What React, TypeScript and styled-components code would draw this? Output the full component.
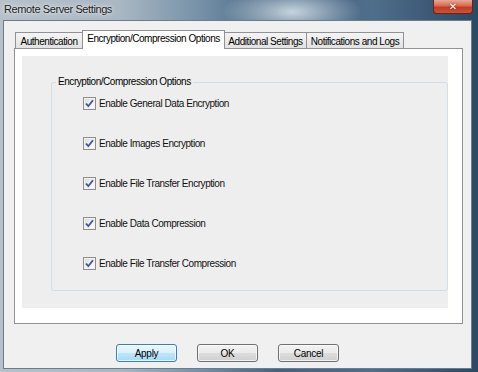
import React from "react";
import styled, { createGlobalStyle } from "styled-components";

const Global = createGlobalStyle`
  html, body { margin: 0; padding: 0; }
  body {
    width: 478px;
    height: 372px;
    overflow: hidden;
    font-family: "Liberation Sans", Arial, sans-serif;
  }
`;

const Frame = styled.div`
  width: 478px;
  height: 372px;
  box-sizing: border-box;
  display: flex;
  flex-direction: column;
  background:
    radial-gradient(ellipse 70px 26px at 292px 12px, rgba(220, 232, 240, 0.85), rgba(220, 232, 240, 0) 100%),
    linear-gradient(90deg, #b6c1ca 0%, #a9b7c3 25%, #7590a7 42%, #45627d 58%, #4f6e8a 78%, #2c4963 100%);
`;

const TitleBar = styled.div`
  height: 20px;
  flex: none;
  display: flex;
  align-items: flex-start;
  padding: 0 5px 0 4px;
`;

const Title = styled.div`
  font-size: 11px;
  line-height: 14px;
  padding-top: 2px;
  letter-spacing: -0.4px;
  color: #1a1a1a;
  text-shadow: 0 0 6px rgba(255, 255, 255, 0.9), 0 0 2px rgba(255, 255, 255, 0.8);
`;

const CloseButton = styled.div`
  margin-left: auto;
  width: 40px;
  height: 14px;
  box-sizing: border-box;
  border: 1px solid #6b2416;
  border-top: none;
  border-radius: 0 0 4px 4px;
  background: linear-gradient(180deg, #e8a898 0%, #d66a52 45%, #c23b22 55%, #c9553c 100%);
  display: flex;
  align-items: center;
  justify-content: center;
  color: #fff;
  font-family: "DejaVu Sans", sans-serif;
  font-weight: bold;
  font-size: 10px;
  line-height: 10px;
  text-shadow: 0 0 2px #5a1a0c;
`;

const Client = styled.div`
  flex: 1;
  margin: 0 6px 3px 3px;
  background: #f0f0f0;
  border: 1px solid #6e7c8a;
  display: flex;
  flex-direction: column;
  padding: 9px 0 0 10px;
`;

const TabStrip = styled.div`
  height: 18px;
  display: flex;
  align-items: flex-end;
  padding-left: 1px;
  position: relative;
  z-index: 1;
`;

const Tab = styled.div<{ $active?: boolean; $width: number }>`
  box-sizing: border-box;
  width: ${(p) => p.$width}px;
  height: ${(p) => (p.$active ? "19px" : "16px")};
  margin-bottom: ${(p) => (p.$active ? "-1px" : "0")};
  margin-left: -1px;
  padding-top: ${(p) => (p.$active ? "2px" : "3px")};
  text-align: center;
  border: 1px solid #8e9196;
  border-bottom: none;
  background: ${(p) =>
    p.$active ? "#ffffff" : "linear-gradient(180deg, #f4f4f4 0%, #ececec 50%, #e2e2e2 100%)"};
  font-size: 10px;
  line-height: 12px;
  letter-spacing: -0.45px;
  color: #000;
  white-space: nowrap;
  &:first-child { margin-left: 0; }
`;

const Panel = styled.div`
  width: 449px;
  height: 276px;
  box-sizing: border-box;
  border: 1px solid #8e9196;
  background: #ffffff;
  padding: 7px 14px 15px 7px;
  display: flex;
`;

const Inner = styled.div`
  flex: 1;
  background: #eeeeee;
  padding: 20px 0 17px 29px;
  display: flex;
`;

const Group = styled.fieldset`
  flex: 1;
  margin: 0;
  padding: 0;
  border: 1px solid #d3dde5;
  border-radius: 3px;
  min-width: 0;
`;

const Legend = styled.legend`
  margin-left: 4px;
  padding: 0 2px;
  font-size: 10px;
  line-height: 12px;
  letter-spacing: -0.45px;
  color: #000;
`;

const OptionList = styled.div`
  display: flex;
  flex-direction: column;
  gap: 27px;
  padding: 9px 0 0 31px;
`;

const Option = styled.label`
  display: flex;
  align-items: center;
  height: 13px;
  font-size: 10px;
  letter-spacing: -0.45px;
  color: #111;
`;

const Box = styled.span`
  width: 13px;
  height: 13px;
  box-sizing: border-box;
  border: 1px solid #8f8f8f;
  background: linear-gradient(135deg, #d8d8d8 0%, #f4f4f4 60%, #ffffff 100%);
  box-shadow: inset 0 0 0 1px #f2f2f2;
  display: flex;
  align-items: center;
  justify-content: center;
  margin-right: 3px;
  flex: none;
`;

const ButtonRow = styled.div`
  display: flex;
  gap: 20px;
  margin-top: 20px;
  padding-left: 102px;
`;

const Button = styled.div<{ $default?: boolean }>`
  width: 61px;
  height: 18px;
  box-sizing: border-box;
  border: 1px solid ${(p) => (p.$default ? "#3c7fb1" : "#707070")};
  border-radius: 3px;
  background: ${(p) =>
    p.$default
      ? "linear-gradient(180deg, #eaf6fd 0%, #d9f0fc 50%, #bee6fd 51%, #a7d9f5 100%)"
      : "linear-gradient(180deg, #f2f2f2 0%, #ebebeb 50%, #dddddd 51%, #cfcfcf 100%)"};
  box-shadow: inset 0 0 0 1px rgba(255, 255, 255, 0.7);
  display: flex;
  align-items: center;
  justify-content: center;
  font-size: 10px;
  letter-spacing: -0.3px;
  color: #000;
`;

const Check = () => (
  <svg width="9" height="9" viewBox="0 0 9 9">
    <path d="M1 4.5 L3.3 7.2 L8 1.2" fill="none" stroke="#3f5596" strokeWidth="1.8" strokeLinejoin="miter" />
  </svg>
);

const options = [
  "Enable General Data Encryption",
  "Enable Images Encryption",
  "Enable File Transfer Encryption",
  "Enable Data Compression",
  "Enable File Transfer Compression",
];

const tabs = [
  { label: "Authentication", width: 68 },
  { label: "Encryption/Compression Options", width: 143 },
  { label: "Additional Settings", width: 83 },
  { label: "Notifications and Logs", width: 98 },
];

export default function App() {
  return (
    <>
      <Global />
      <Frame>
        <TitleBar>
          <Title>Remote Server Settings</Title>
          <CloseButton>✕</CloseButton>
        </TitleBar>
        <Client>
          <TabStrip>
            {tabs.map((t, i) => (
              <Tab key={t.label} $active={i === 1} $width={t.width}>
                {t.label}
              </Tab>
            ))}
          </TabStrip>
          <Panel>
            <Inner>
              <Group>
                <Legend>Encryption/Compression Options</Legend>
                <OptionList>
                  {options.map((o) => (
                    <Option key={o}>
                      <Box>
                        <Check />
                      </Box>
                      {o}
                    </Option>
                  ))}
                </OptionList>
              </Group>
            </Inner>
          </Panel>
          <ButtonRow>
            <Button $default>Apply</Button>
            <Button>OK</Button>
            <Button>Cancel</Button>
          </ButtonRow>
        </Client>
      </Frame>
    </>
  );
}
